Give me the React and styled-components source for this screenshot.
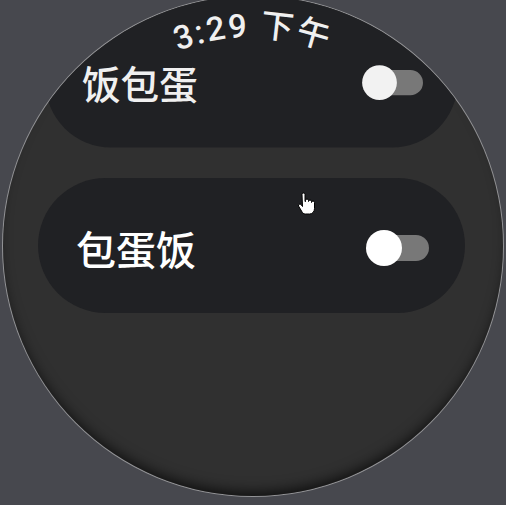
import React, { useState } from "react";
import styled, { createGlobalStyle } from "styled-components";

const GlobalStyle = createGlobalStyle`
  html, body {
    margin: 0;
    padding: 0;
    background: #47484e;
    overflow: hidden;
  }
  body {
    font-family: "Roboto", "Noto Sans CJK SC", sans-serif;
  }
`;

const Page = styled.div`
  width: 506px;
  height: 505px;
  padding-left: 3px;
  box-sizing: border-box;
`;

const Watch = styled.div`
  position: relative;
  width: 500px;
  height: 500px;
  margin-top: -4px;
  border-radius: 50%;
  overflow: hidden;
  background: #303030;
  box-shadow: inset 0 -9px 14px -6px rgba(0, 0, 0, 0.75),
    0 0 0 1px rgba(210, 210, 210, 0.55);
`;

const List = styled.div`
  display: flex;
  flex-direction: column;
  gap: 28px;
  padding: 0 38px 0 35px;
`;

const Chip = styled.div`
  height: ${(p) => p.$height || 135}px;
  border-radius: 68px;
  background: #202124;
  display: flex;
  align-items: center;
  justify-content: space-between;
  padding: ${(p) => p.$top || 4}px 36px 0 38px;
  box-sizing: border-box;
  transform: scale(${(p) => p.$scale || 1});
  transform-origin: center;
`;

const Label = styled.span`
  font-family: "Noto Sans CJK SC", sans-serif;
  font-size: 40px;
  font-weight: 500;
  color: ${(p) => (p.$dim ? "#f0f0f0" : "#ffffff")};
`;

const Toggle = styled.div`
  position: relative;
  width: 63px;
  height: 38px;
  display: flex;
  align-items: center;
  cursor: pointer;
`;

const Track = styled.div`
  margin-left: 14px;
  width: 49px;
  height: 26px;
  border-radius: 13px;
  background: #787878;
`;

const Knob = styled.div`
  position: absolute;
  left: 0;
  top: 1px;
  width: 36px;
  height: 36px;
  border-radius: 50%;
  background: ${(p) => (p.$dim ? "#f2f2f2" : "#ffffff")};
`;

const TimeArc = styled.svg`
  position: absolute;
  left: 0;
  top: 0;
  pointer-events: none;
`;

const Cursor = styled.svg`
  position: absolute;
  left: 294px;
  top: 196px;
`;

function Switch({ dim }) {
  const [on, setOn] = useState(false);
  return (
    <Toggle onClick={() => setOn(!on)}>
      <Track />
      <Knob $dim={dim} />
    </Toggle>
  );
}

export default function App() {
  return (
    <Page>
      <GlobalStyle />
      <Watch>
        <List>
          <Chip $scale={0.966} $height={154} $top={20}>
            <Label $dim>饭包蛋</Label>
            <Switch dim />
          </Chip>
          <Chip>
            <Label>包蛋饭</Label>
            <Switch />
          </Chip>
        </List>
        <TimeArc width="500" height="90" viewBox="0 0 500 90">
          <defs>
            <path id="timePath" d="M 41 250 A 209 209 0 0 1 459 250" />
          </defs>
          <text
            fill="#f0f0f0"
            fontSize="33"
            fontWeight="500"
            letterSpacing="2"
            fontFamily="Roboto, 'Noto Sans CJK SC', sans-serif"
            textAnchor="middle"
          >
            <textPath href="#timePath" startOffset="50%">
              3:29 下午
            </textPath>
          </text>
        </TimeArc>
        <Cursor width="18" height="24" viewBox="0 0 18 24">
          <path
            d="M5 2.5a1.5 1.5 0 0 1 3 0v7h.5v-1a1.5 1.5 0 0 1 3 0v1a1.5 1.5 0 0 1 3 0v1a1.5 1.5 0 0 1 3 0v6c0 3-2 5.5-5 5.5h-4c-2 0-3-1-4-3l-3-5a1.5 1.5 0 0 1 2.5-1.5l1.5 2z"
            fill="#ffffff"
            stroke="#000000"
            strokeWidth="1"
          />
        </Cursor>
      </Watch>
    </Page>
  );
}
